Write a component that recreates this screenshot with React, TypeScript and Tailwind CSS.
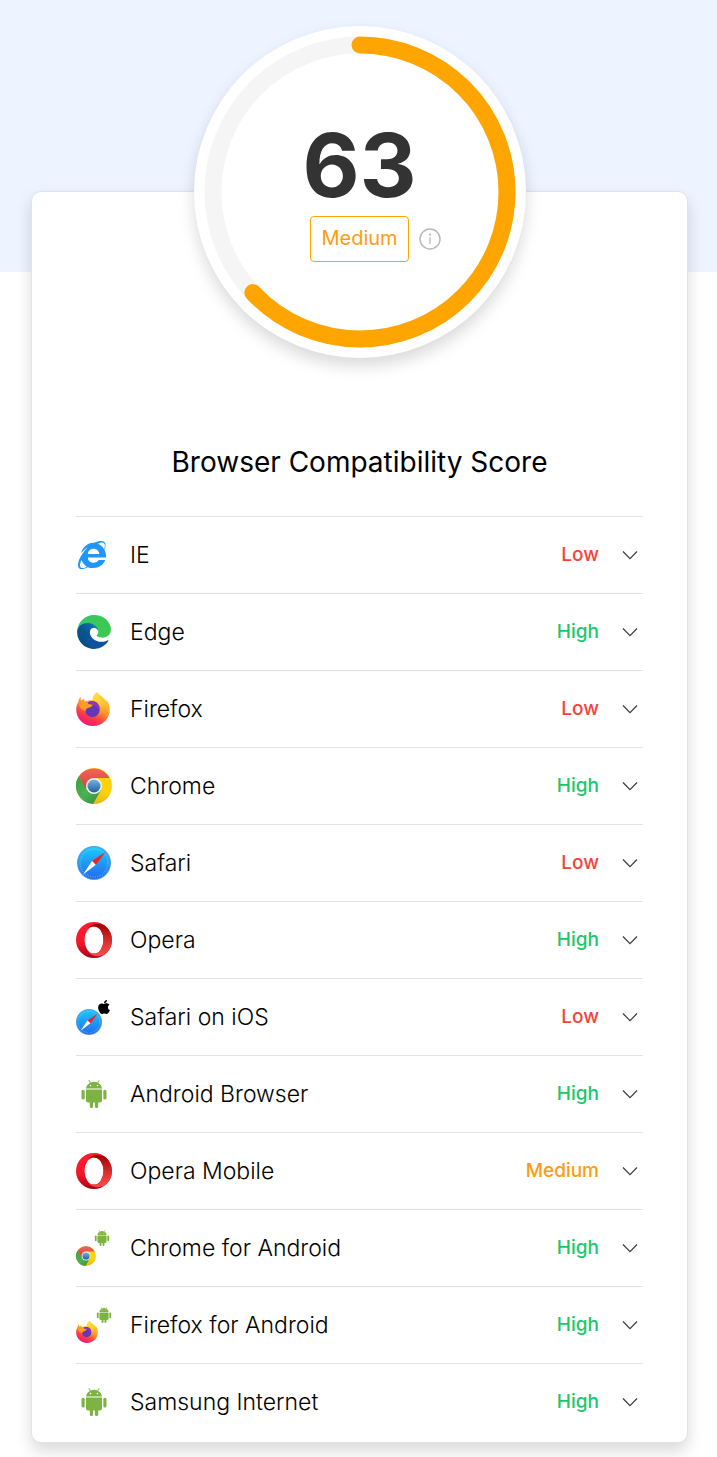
import React from 'react';
import { FaApple, FaInternetExplorer } from 'react-icons/fa';

type Level = 'Low' | 'Medium' | 'High';

interface IconProps {
  className?: string;
}

interface Browser {
  name: string;
  level: Level;
  icon: React.ReactNode;
}

const levelColor: Record<Level, string> = {
  Low: 'text-[#f9423a]',
  Medium: 'text-[#ff9c10]',
  High: 'text-[#1cc76a]',
};

function EdgeIcon({ className }: IconProps) {
  return (
    <svg className={className} viewBox="4 4 257 257" aria-hidden="true">
      <defs>
        <linearGradient id="edgeGreen" x1="0" y1="0" x2="1" y2="0">
          <stop offset="0" stopColor="#35bda0" />
          <stop offset="0.2" stopColor="#39c666" />
          <stop offset="1" stopColor="#3bc94e" />
        </linearGradient>
        <linearGradient id="edgeBlue" x1="1" y1="0" x2="0" y2="1">
          <stop offset="0" stopColor="#1583c8" />
          <stop offset="0.5" stopColor="#0a5590" />
          <stop offset="1" stopColor="#07497e" />
        </linearGradient>
      </defs>
      <path
        fill="#0c539c"
        d="M235.68 195.46a93.73 93.73 0 0 1-10.54 4.71 101.87 101.87 0 0 1-35.9 6.46c-47.32 0-88.54-32.55-88.54-74.32A31.48 31.48 0 0 1 117.13 105c-42.8 1.8-53.8 46.4-53.8 72.53 0 73.88 68.09 81.37 82.76 81.37 7.91 0 19.84-2.3 27-4.56l1.31-.44a128.34 128.34 0 0 0 66.6-52.8 4 4 0 0 0-5.32-5.64z"
      />
      <path
        fill="url(#edgeBlue)"
        d="M110.34 246.34A79.2 79.2 0 0 1 87.6 225a80.72 80.72 0 0 1 29.53-120c3.12-1.47 8.45-4.13 15.54-4a32.35 32.35 0 0 1 25.69 13 31.88 31.88 0 0 1 6.36 18.66c0-.21 24.46-79.6-80-79.6-43.9 0-80 41.66-80 78.21a130.15 130.15 0 0 0 12.11 56 128 128 0 0 0 156.38 67.11 75.55 75.55 0 0 1-62.78-8z"
      />
      <path
        fill="url(#edgeGreen)"
        d="M156.94 153.78c-.81 1.05-3.3 2.5-3.3 5.66 0 2.61 1.7 5.12 4.72 7.23 14.38 10 41.49 8.68 41.56 8.68a59.56 59.56 0 0 0 30.27-8.35 61.38 61.38 0 0 0 30.43-52.88c.26-22.41-8-37.31-11.34-43.91C228.09 28.76 182.35 4.92 132.61 4.92a128 128 0 0 0-128 126.2c.48-36.54 36.8-66.05 80-66.05 3.5 0 23.46.34 42 10.07 16.34 8.58 24.9 18.94 30.85 29.21 6.18 10.67 7.28 24.15 7.28 29.52s-2.74 13.33-7.8 19.91z"
      />
    </svg>
  );
}

function FirefoxIcon({ className }: IconProps) {
  return (
    <svg className={className} viewBox="0 0 34 34" aria-hidden="true">
      <defs>
        <linearGradient id="foxBody" x1="0.75" y1="0.1" x2="0.3" y2="1">
          <stop offset="0" stopColor="#ffd43a" />
          <stop offset="0.4" stopColor="#ff9a2a" />
          <stop offset="0.7" stopColor="#fb3e45" />
          <stop offset="1" stopColor="#ec1380" />
        </linearGradient>
        <linearGradient id="foxFlame" x1="0" y1="0" x2="0.2" y2="1">
          <stop offset="0" stopColor="#ffe64c" />
          <stop offset="0.6" stopColor="#ffc531" />
          <stop offset="1" stopColor="#ff8a2b" stopOpacity="0" />
        </linearGradient>
      </defs>
      <path
        fill="url(#foxBody)"
        d="M21.5 0c-4 2.400-4.800 5.500-4.800 8.200-3-.2-5.500.3-7.700 1.300-.4-.7-1-1.700-.6-3.100-1.300.6-2.300 1.500-3 2.400-.7-.9-.8-2.600-.6-4C2.900 6.300 2.500 8.500 2.400 9.800 1 12 .2 14.800.2 17.500.2 26.500 7.500 34 17 34s16.800-7.300 16.800-16.500c0-5-1.800-8.500-4.200-10.800.6 1.200 1 2.300 1.100 3.400C28.400 5.200 23.500 4 21.500 0z"
      />
      <path
        fill="url(#foxFlame)"
        d="M21.500 0c-4 2.400-5 6-4.800 8.800 4 .2 7.800 3 7.800 8 0 4.500-3.300 8-8.500 8 8 2.500 13.500-3 13.800-8.300.2-5-3-7.300-5.200-10C23 4.500 22 2 21.500 0z"
      />
      <path
        fill="#6637b4"
        d="M12 10.500c1.600-1.300 4-1.700 6.500-1 3 1 5 3.600 5.200 7.500.1 4.500-3 8-7.200 8-4 0-7-2.800-7-6.300z"
      />
      <path fill="#9430c5" d="M11.500 10.600c4-2.800 9.600-1.400 11.900 4.400l-1.500 2c-2-4-6-4.600-10.400-6.400z" />
      <path
        fill="#ff9a22"
        d="M2.500 11C5 9 9.600 9.500 11.300 11c1.600 1.100 3.200 1.500 5.400 1.500-.2 1.800-2.400 2.800-3.800 3.300-2.500.6-3 1.700-3.500 3.200C7 18.500 3 16 2.500 11z"
      />
    </svg>
  );
}

function ChromeIcon({ className }: IconProps) {
  return (
    <svg className={className} viewBox="0 0 36 36" aria-hidden="true">
      <defs>
        <linearGradient id="chromeRed" x1="0" y1="0" x2="0" y2="1">
          <stop offset="0" stopColor="#f0655b" />
          <stop offset="1" stopColor="#d83f37" />
        </linearGradient>
        <linearGradient id="chromeBlue" x1="0" y1="0" x2="0" y2="1">
          <stop offset="0" stopColor="#75b5e3" />
          <stop offset="1" stopColor="#1e609f" />
        </linearGradient>
        <linearGradient id="chromeGreen" x1="0" y1="0" x2="1" y2="1">
          <stop offset="0" stopColor="#3b9c46" />
          <stop offset="0.5" stopColor="#4bb154" />
          <stop offset="1" stopColor="#328b3c" />
        </linearGradient>
        <linearGradient id="chromeYellow" x1="0" y1="0" x2="0" y2="1">
          <stop offset="0" stopColor="#ffd90c" />
          <stop offset="0.7" stopColor="#fbd00d" />
          <stop offset="1" stopColor="#e4b51a" />
        </linearGradient>
      </defs>
      <circle cx="18" cy="18" r="18" fill="url(#chromeYellow)" />
      <path fill="url(#chromeGreen)" d="M3 8A18 18 0 0 0 17 36l8-14-7-4-7 4z" />
      <path fill="url(#chromeRed)" d="M3 8.200A18 18 0 0 1 33.600 10H18l-8 11z" />
      <circle cx="18" cy="18" r="8" fill="#eef3f1" />
      <circle cx="18" cy="18" r="6.500" fill="url(#chromeBlue)" />
    </svg>
  );
}

function SafariIcon({ className }: IconProps) {
  return (
    <svg className={className} viewBox="0 0 34 34" aria-hidden="true">
      <defs>
        <linearGradient id="safariDial" x1="0" y1="0" x2="0" y2="1">
          <stop offset="0" stopColor="#1bcafc" />
          <stop offset="1" stopColor="#2369f0" />
        </linearGradient>
      </defs>
      <circle cx="17" cy="17" r="17" fill="#4c9fe9" />
      <circle cx="17" cy="17" r="16" fill="url(#safariDial)" />
      <circle
        cx="17"
        cy="17"
        r="14"
        fill="none"
        stroke="#a5dcff"
        strokeOpacity="0.6"
        strokeWidth="1.500"
        strokeDasharray="0.6 1.200"
      />
      <path fill="#ff1d18" d="M28.500 6 15 15l3.800 3.700z" />
      <path fill="#ffffff" d="M6 28.500 15 15l3.800 3.700z" />
    </svg>
  );
}

function OperaIcon({ className }: IconProps) {
  return (
    <svg className={className} viewBox="0 0 37 37" aria-hidden="true">
      <defs>
        <linearGradient id="operaLeft" x1="0" y1="0" x2="0" y2="1">
          <stop offset="0.2" stopColor="#ff1b2d" />
          <stop offset="0.6" stopColor="#f4142a" />
          <stop offset="1" stopColor="#a70014" />
        </linearGradient>
        <linearGradient id="operaRight" x1="0" y1="0" x2="0" y2="1">
          <stop offset="0" stopColor="#9c0000" />
          <stop offset="0.6" stopColor="#dd3431" />
          <stop offset="1" stopColor="#ff4b4b" />
        </linearGradient>
      </defs>
      <path
        fill="url(#operaLeft)"
        fillRule="evenodd"
        d="M18.500 0a18.500 18.500 0 1 0 0 37 18.500 18.500 0 1 0 0-37zm0 4.500a9.700 14 0 1 1 0 28 9.700 14 0 1 1 0-28z"
      />
      <path
        fill="url(#operaRight)"
        d="M12 6.600C17 .7 24.500.5 30.800 4.700a18.500 18.500 0 0 1 0 27.600C24.500 36.500 17 36.300 12 30.400c2 1.600 4 2.100 6.500 2.100a9.700 14 0 0 0 0-28c-2.500 0-4.500.5-6.500 2.100z"
      />
    </svg>
  );
}

function AndroidIcon({ className }: IconProps) {
  return (
    <svg className={className} viewBox="0 0 26 28" fill="#7cb342" aria-hidden="true">
      <path d="M5 8.600C5.200 6.200 6.700 4 8.900 2.900L7.500.7a.4.4 0 0 1 .7-.4l1.500 2.200a9 9 0 0 1 6.600 0L17.800.3a.4.4 0 0 1 .7.4l-1.400 2.200C19.300 4 20.800 6.200 21 8.600z" />
      <circle cx="9.500" cy="5.600" r="0.800" fill="#ffffff" />
      <circle cx="16.500" cy="5.600" r="0.800" fill="#ffffff" />
      <path d="M5 9.600h16v11a2 2 0 0 1-2 2h-1.800v3.800a1.600 1.600 0 0 1-3.300 0v-3.800h-1.800v3.800a1.600 1.600 0 0 1-3.300 0v-3.800H7a2 2 0 0 1-2-2z" />
      <rect x="0.500" y="9.800" width="3.200" height="9.800" rx="1.600" />
      <rect x="22.300" y="9.800" width="3.200" height="9.800" rx="1.600" />
    </svg>
  );
}

function InfoIcon({ className }: IconProps) {
  return (
    <svg className={className} viewBox="0 0 22 22" fill="none" stroke="#b9b9b9" aria-hidden="true">
      <circle cx="11" cy="11" r="10" strokeWidth="1.500" />
      <path d="M11 9.200V16" strokeWidth="1.300" />
      <circle cx="11" cy="6.600" r="1.100" fill="#b9b9b9" stroke="none" />
    </svg>
  );
}

function ChevronIcon({ className }: IconProps) {
  return (
    <svg className={className} viewBox="0 0 16 10" fill="none" stroke="#3c3c3c" aria-hidden="true">
      <path d="m1 1.500 7 7.200 7-7.200" strokeWidth="1.200" />
    </svg>
  );
}

// small platform logo sits over the top right corner of the browser logo
function IconPair({ main, badge }: { main: React.ReactNode; badge: React.ReactNode }) {
  return (
    <span className="relative flex items-end w-9 h-9">
      {main}
      <span className="absolute top-0 right-0">{badge}</span>
    </span>
  );
}

const browsers: Browser[] = [
  { name: 'IE', level: 'Low', icon: <FaInternetExplorer className="w-7 h-7 mr-1 text-[#2196f9]" /> },
  { name: 'Edge', level: 'High', icon: <EdgeIcon className="w-[34px] h-[34px]" /> },
  { name: 'Firefox', level: 'Low', icon: <FirefoxIcon className="w-[34px] h-[34px] mr-[2px]" /> },
  { name: 'Chrome', level: 'High', icon: <ChromeIcon className="w-9 h-9" /> },
  { name: 'Safari', level: 'Low', icon: <SafariIcon className="w-[34px] h-[34px]" /> },
  { name: 'Opera', level: 'High', icon: <OperaIcon className="w-9 h-9" /> },
  {
    name: 'Safari on iOS',
    level: 'Low',
    icon: (
      <IconPair
        main={<SafariIcon className="w-[26px] h-[26px]" />}
        badge={<FaApple className="w-4 h-4 text-black" />}
      />
    ),
  },
  { name: 'Android Browser', level: 'High', icon: <AndroidIcon className="w-[26px] h-7" /> },
  { name: 'Opera Mobile', level: 'Medium', icon: <OperaIcon className="w-9 h-9" /> },
  {
    name: 'Chrome for Android',
    level: 'High',
    icon: (
      <IconPair
        main={<ChromeIcon className="w-5 h-5" />}
        badge={<AndroidIcon className="w-4 h-4 mr-[2px]" />}
      />
    ),
  },
  {
    name: 'Firefox for Android',
    level: 'High',
    icon: (
      <IconPair
        main={<FirefoxIcon className="w-[22px] h-[22px]" />}
        badge={<AndroidIcon className="w-4 h-4" />}
      />
    ),
  },
  { name: 'Samsung Internet', level: 'High', icon: <AndroidIcon className="w-[26px] h-7" /> },
];

function ScoreGauge({ score, level }: { score: number; level: Level }) {
  return (
    <div className="relative w-[332px] h-[332px] -mt-[166px] mx-auto rounded-full bg-white shadow-[0_8px_16px_rgba(0,0,0,0.15)]">
      <svg
        className="w-full h-full -rotate-90"
        viewBox="0 0 332 332"
        fill="none"
        strokeWidth="17"
        aria-hidden="true"
      >
        <circle cx="166" cy="166" r="147" stroke="#f5f5f5" />
        <circle
          cx="166"
          cy="166"
          r="147"
          stroke="#ffa500"
          strokeLinecap="round"
          pathLength="100"
          strokeDasharray={`${score} 100`}
        />
      </svg>
      <div className="absolute inset-0 flex flex-col items-center pt-[91px]">
        <p className="text-[88px] leading-[96px] font-bold text-[#333333]">{score}</p>
        <div className="relative mt-[3px]">
          <p className="px-[10px] pt-[5px] pb-[7px] rounded border border-[#ffa500] text-xl leading-8 text-[#ff9c10]">
            {level}
          </p>
          <button
            type="button"
            aria-label="About this score"
            className="absolute left-full top-3 ml-[10px]"
          >
            <InfoIcon className="w-[22px] h-[22px]" />
          </button>
        </div>
      </div>
    </div>
  );
}

function BrowserRow({ name, level, icon }: Browser) {
  return (
    <li className="border-t border-[#dee4ea]">
      <button
        type="button"
        aria-expanded="false"
        className="flex items-center w-full h-[76px] pr-[5px] text-left"
      >
        <span className="flex justify-center items-center w-9 mr-[18px]">{icon}</span>
        <span className="text-[23px] leading-8 font-light">{name}</span>
        <span className={`ml-auto text-[19px] leading-6 font-medium ${levelColor[level]}`}>
          {level}
        </span>
        <ChevronIcon className="w-4 h-[10px] ml-[23px]" />
      </button>
    </li>
  );
}

export default function App() {
  return (
    <div className="pb-4 overflow-hidden bg-white font-['Inter','Liberation_Sans',sans-serif] text-black">
      <div className="h-[272px] bg-[#edf4ff]" />
      <main className="relative -mt-[81px] ml-[31px] mr-[29px] px-11 pb-[2px] rounded-[10px] border border-[#dee4ea] bg-white shadow-[0_8px_16px_rgba(0,0,0,0.15)]">
        <ScoreGauge score={63} level="Medium" />
        <h1 className="mt-[84px] mb-[34px] text-center text-[28px] leading-10 font-normal">
          Browser Compatibility Score
        </h1>
        <ul>
          {browsers.map((browser) => (
            <BrowserRow key={browser.name} {...browser} />
          ))}
        </ul>
      </main>
    </div>
  );
}
